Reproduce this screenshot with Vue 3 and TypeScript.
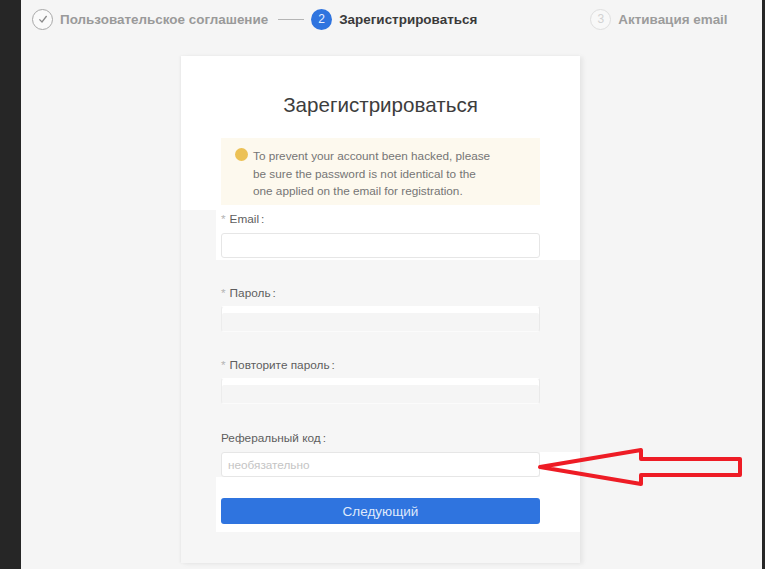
<script setup lang="ts">
const steps = [
  { key: 'done', text: 'Пользовательское соглашение' },
  { key: 'active', text: 'Зарегистрироваться', mark: '2' },
  { key: 'todo', text: 'Активация email', mark: '3' },
]
const notice = ['To prevent your account been hacked, please', 'be sure the password is not identical to the', 'one applied on the email for registration.']
</script>

<template>
  <div class="screen">
    <div class="page">
      <header class="steps">
        <div class="step done">
          <span class="circle">
            <svg width="12" height="12" viewBox="0 0 12 12"><path d="M2.4 6.4 5 9l4.6-6" fill="none" stroke="#8a8a8a" stroke-width="1.3" /></svg>
          </span>
          <span class="step-text">{{ steps[0].text }}</span>
        </div>
        <span class="line"></span>
        <div class="step active">
          <span class="circle">{{ steps[1].mark }}</span>
          <span class="step-text">{{ steps[1].text }}</span>
        </div>
        <div class="step todo">
          <span class="circle">{{ steps[2].mark }}</span>
          <span class="step-text">{{ steps[2].text }}</span>
        </div>
      </header>

      <main class="card">
        <section class="top">
          <h1>Зарегистрироваться</h1>
          <div class="notice">
            <span class="dot"></span>
            <p><span v-for="l in notice" :key="l" class="nline">{{ l }}</span></p>
          </div>
        </section>
        <section class="email-band">
          <div class="email-inner">
            <label class="label"><i>*</i>Email<b>:</b></label>
            <input class="input white" type="text" />
          </div>
        </section>
        <section class="gray-band">
          <label class="label pw"><i>*</i>Пароль<b>:</b></label>
          <input class="input tall" type="text" />
          <label class="label second"><i>*</i>Повторите пароль<b>:</b></label>
          <input class="input tall" type="text" />
          <label class="label third">Реферальный код<b>:</b></label>
          <div class="ref-row">
            <input class="input white" type="text" placeholder="необязательно" />
            <span class="ref-side"></span>
            <svg class="arrow" width="206" height="40" viewBox="0 0 206 40">
              <path d="M2 20 L103 3 L103 12 L202 12 L202 28 L103 28 L103 37 Z" fill="none" stroke="#ee1c25" stroke-width="4" stroke-linejoin="round" />
            </svg>
          </div>
        </section>
        <section class="button-band">
          <button type="button" class="next">Следующий</button>
        </section>
      </main>
    </div>
  </div>
</template>

<style>
body { margin: 0; background: #262626; }
</style>

<style scoped>
.screen {
  width: 765px;
  height: 569px;
  overflow: hidden;
  background: #262626;
  font-family: "Liberation Sans", Arial, sans-serif;
}
.page {
  width: 741px;
  height: 569px;
  margin-left: 21px;
  background: #f5f5f5;
  overflow: hidden;
}
.steps {
  display: flex;
  align-items: center;
  height: 38px;
  padding-left: 11px;
  font-size: 13.45px;
  font-weight: 700;
}
.step { display: flex; align-items: center; gap: 7px; }
.circle {
  width: 21px;
  height: 21px;
  box-sizing: border-box;
  border-radius: 50%;
  display: flex;
  align-items: center;
  justify-content: center;
  font-size: 12px;
  font-weight: 400;
}
.done .circle { border: 1px solid #a8a8a8; background: #fafafa; }
.done .step-text { color: #9a9a9a; }
.line { width: 26px; height: 1px; background: #b5b5b5; margin: 0 7px 0 10px; }
.active .circle { background: #2f74df; color: #e8f0ff; }
.active .step-text { color: #3a3a3a; }
.todo { margin-left: 113px; }
.todo .circle { border: 1px solid #dedede; color: #d2d2d2; background: #f8f8f8; }
.todo .step-text { color: #9c9c9c; }

.card {
  width: 399px;
  height: 507px;
  margin: 18px 0 0 160px;
  background: #f6f6f6;
  box-shadow: 3px 1px 4px #e6e6e6, -1px 0 2px #e9e9e9;
}
.top { background: #fff; height: 154px; padding: 36px 40px 0; box-sizing: border-box; }
h1 {
  margin: 0 0 20px;
  font-size: 20.6px;
  line-height: 26px;
  font-weight: 400;
  color: #3d3d3d;
  text-align: center;
}
.notice {
  display: flex;
  background: #fdf9ee;
  width: 319px;
  height: 67px;
  box-sizing: border-box;
  padding: 9px 14px;
  gap: 5px;
}
.dot { width: 13px; height: 13px; margin-top: 1px; border-radius: 50%; background: #ecc155; flex: none; }
p { margin: 0; font-size: 11.75px; line-height: 17.5px; color: #757575; }
.nline { display: block; white-space: nowrap; }

.email-band { height: 50px; padding-left: 35px; }
.email-inner { background: #fff; height: 50px; padding: 2px 0 0 5px; box-sizing: border-box; }
.label { display: block; font-size: 11.8px; line-height: 14px; color: #5e5e5e; white-space: nowrap; }
.label i { font-style: normal; color: #b5b5b5; margin-right: 4px; }
.label b { font-weight: 400; margin-left: 2px; }
.email-inner .label { margin-bottom: 7px; }
.input {
  display: block;
  width: 319px;
  height: 25px;
  box-sizing: border-box;
  border: 1px solid #ececec;
  border-radius: 3px;
  outline: none;
  padding: 0 6px;
  font: 11.75px "Liberation Sans", Arial, sans-serif;
}
.tall {
  height: 26px;
  background: #f5f5f5;
  border-color: #fff #e9e9e9 #fbfbfb #ececec;
  box-shadow: inset 0 6px 0 #fff;
}
.white { background: #fff; border-color: #e6e6e6; }
.input::placeholder { color: #c4c4c4; }

.gray-band { height: 217px; box-sizing: border-box; padding: 26px 0 0 40px; }
.pw { margin-bottom: 6px; }
.second { margin-top: 26px; margin-bottom: 6px; }
.third { margin-top: 27px; margin-bottom: 7px; }
.ref-row { position: relative; display: flex; }
.ref-side { flex: 1; height: 25px; width: 40px; background: #fff; }
.arrow { position: absolute; left: 317px; top: -5px; }
.button-band { background: #fff; height: 55px; margin-left: 35px; padding: 21px 0 0 5px; box-sizing: border-box; }
.next {
  display: block;
  width: 319px;
  height: 26px;
  border: 0;
  border-radius: 3px;
  background: #2f74df;
  color: #dfe9fb;
  font: 13.5px "Liberation Sans", Arial, sans-serif;
}
</style>
